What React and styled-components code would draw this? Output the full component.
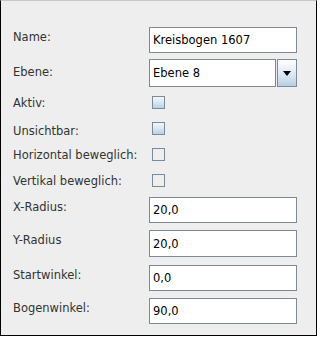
import styled, { createGlobalStyle } from "styled-components";

const GlobalStyle = createGlobalStyle`
  html, body {
    margin: 0;
    padding: 0;
    background: #ffffff;
  }
  body {
    font-family: "DejaVu Sans", "Liberation Sans", sans-serif;
    font-size: 11.5px;
  }
`;

const Panel = styled.div`
  box-sizing: border-box;
  width: 317px;
  height: 336px;
  background: #eeeeee;
  border: 1px solid #000000;
  border-top-color: #c8c8c8;
  padding: 26px 0 0 12px;
  display: flex;
  flex-direction: column;
`;

const Row = styled.div`
  display: grid;
  grid-template-columns: 136px 148px;
  align-items: start;
  height: ${(p) => p.$h}px;
  margin-top: ${(p) => p.$mt || 0}px;
`;

const Label = styled.span`
  color: #333333;
  line-height: 14px;
  white-space: nowrap;
  padding-top: ${(p) => p.$dy || 0}px;
`;

const Field = styled.div`
  box-sizing: border-box;
  height: ${(p) => p.$h || 26}px;
  border: 1px solid #7a8a99;
  background: #ffffff;
  color: #000000;
  padding: 0 3px;
  display: flex;
  align-items: center;
  line-height: 14px;
  white-space: nowrap;
  overflow: hidden;
`;

const Combo = styled.div`
  display: flex;
  gap: 1px;
  height: 28px;
`;

const ComboField = styled(Field)`
  flex: 1;
  height: 28px;
`;

const ComboButton = styled.div`
  box-sizing: border-box;
  width: 20px;
  height: 28px;
  border: 1px solid #7a8a99;
  background: linear-gradient(#ffffff 0%, #dde8f3 55%, #b8cfe5 100%);
  display: flex;
  align-items: center;
  justify-content: center;
`;

const Arrow = styled.span`
  width: 0;
  height: 0;
  border-left: 4.5px solid transparent;
  border-right: 4.5px solid transparent;
  border-top: 5px solid #000000;
  margin-top: 1px;
`;

const Check = styled.span`
  box-sizing: border-box;
  display: block;
  width: 13px;
  height: 13px;
  margin-left: 3px;
  border: 1px solid #7a8a99;
  background: ${(p) =>
    p.$shaded
      ? "linear-gradient(#f2f6fb 0%, #dde8f3 45%, #b8cfe5 100%)"
      : "#eeeeee"};
`;

const TextRow = ({ label, value, mt, h = 26, dy = 3 }) => (
  <Row $h={h} $mt={mt}>
    <Label $dy={dy}>{label}</Label>
    <Field $h={h}>{value}</Field>
  </Row>
);

const CheckRow = ({ label, mt, dy, shaded }) => (
  <Row $h={13} $mt={mt}>
    <Label $dy={dy}>{label}</Label>
    <Check $shaded={shaded} />
  </Row>
);

export default function App() {
  return (
    <>
      <GlobalStyle />
      <Panel>
        <TextRow label="Name:" value="Kreisbogen 1607" dy={3} />
        <Row $h={28} $mt={6}>
          <Label $dy={6}>Ebene:</Label>
          <Combo>
            <ComboField>Ebene 8</ComboField>
            <ComboButton>
              <Arrow />
            </ComboButton>
          </Combo>
        </Row>
        <CheckRow label="Aktiv:" mt={9} dy={-1} shaded />
        <CheckRow label="Unsichtbar:" mt={13} dy={2} shaded />
        <CheckRow label="Horizontal beweglich:" mt={13} dy={-1} />
        <CheckRow label="Vertikal beweglich:" mt={13} dy={0} />
        <TextRow label="X-Radius:" value="20,0" mt={10} />
        <TextRow label="Y-Radius" value="20,0" mt={7} h={27} />
        <TextRow label="Startwinkel:" value="0,0" mt={8} />
        <TextRow label="Bogenwinkel:" value="90,0" mt={7} />
      </Panel>
    </>
  );
}
